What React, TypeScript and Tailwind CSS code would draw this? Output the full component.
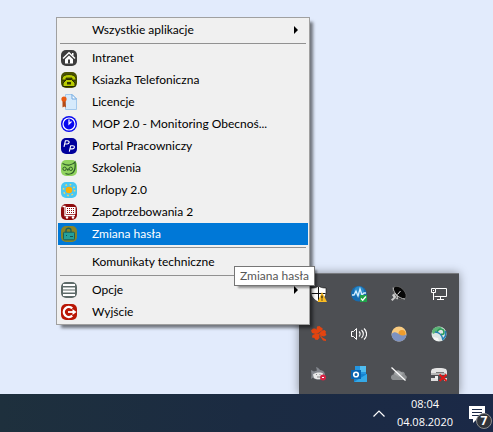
import type { ReactNode } from "react";

function Glyph({ children }: { children: ReactNode }) {
  return (
    <svg viewBox="0 0 16 16" className="size-4 shrink-0" aria-hidden="true" fill="none">
      {children}
    </svg>
  );
}

const HomeIcon = () => (
  <Glyph>
    <rect width="16" height="16" rx="5" fill="#3c3c3c" />
    <path d="M2 8.6 8 2.8l6 5.8" stroke="#fff" strokeWidth="1.4" />
    <path d="M4 9.3v4.2h8V9.3L8 5.6z" fill="#fff" />
    <path d="M7 9.5h2v4H7z" fill="#3c3c3c" />
    <path d="M11 3h1.5v3L11 4.5z" fill="#fff" />
  </Glyph>
);

const PhoneIcon = () => (
  <Glyph>
    <rect width="16" height="16" rx="5" fill="#4b5200" />
    <path d="M1 7c0-6 14-6 14 0v1h-4V6H5v2H1z" fill="#b9cc00" stroke="#252900" strokeWidth=".8" />
    <path d="M5.5 7.5h5L14 11v3.5H2V11z" fill="#b9cc00" stroke="#252900" />
    <path d="M6 10h4v2.5H6z" fill="#343a00" />
  </Glyph>
);

const LicenseIcon = () => (
  <Glyph>
    <path d="M4.5.5H11L15.5 5v10.5h-11z" fill="#d6eafc" stroke="#a4c9ec" />
    <path d="M11 .5V5h4.5z" fill="#fff" stroke="#70a8df" />
    <path d="M1.5 6h3L5 13.5l-1.7-1-1.8 1z" fill="#b44a16" />
    <circle cx="3" cy="5" r="2.6" fill="#e95a12" />
  </Glyph>
);

const ClockIcon = () => (
  <Glyph>
    <circle cx="8" cy="8" r="8" fill="#0909ef" />
    <circle cx="8" cy="8" r="6" stroke="#fff" strokeWidth="1.2" />
    <path d="M8 3.5V8l2.5-2.5" stroke="#fff" strokeWidth="1.2" />
  </Glyph>
);

const PortalIcon = () => (
  <Glyph>
    <rect width="16" height="16" rx="5" fill="#00009c" />
    <path d="m3 8.8 1.4-6h2.1c2.6 0 2 3.2-.4 3.2H4M8.3 13.7l1.4-6h2c2.6 0 2 3.2-.4 3.2H9" stroke="#fff" strokeWidth="1.1" />
  </Glyph>
);

const OwlIcon = () => (
  <Glyph>
    <rect width="16" height="16" rx="5" fill="#91d35f" />
    <path d="M1.5 3.5c3 1.5 5 2 7 1.5 2-.3 4-1 5.5-3 .5 4 .5 8-2 10.5-1.5 1.5-5 2-7.5 1" stroke="#2c5c28" strokeWidth="1.2" />
    <circle cx="3.6" cy="8.8" r="1.7" stroke="#2c5c28" />
    <circle cx="9.8" cy="8.8" r="1.7" stroke="#2c5c28" />
    <path d="m6 8.5.8 2 .8-2" stroke="#2c5c28" />
  </Glyph>
);

const SunIcon = () => (
  <Glyph>
    <rect width="16" height="16" rx="5" fill="#48c7f4" />
    <circle cx="8" cy="8" r="3.3" fill="#ffad00" />
    <circle cx="8" cy="8" r="5.6" stroke="#f6d45f" strokeWidth="1.6" strokeDasharray="1.6 2.8" />
  </Glyph>
);

const CartIcon = () => (
  <Glyph>
    <rect width="16" height="16" rx="5" fill="#8e0a0c" />
    <path d="M1.5 2.5H4v9h10" stroke="#fff" strokeWidth="1.3" />
    <path d="M5 3h9.5v7H5z" fill="#fff" />
    <path d="M6 4.5h8M6 6.5h8M6 8.5h8" stroke="#8e0a0c" strokeDasharray="1 1" />
    <circle cx="6" cy="13.5" r="1.2" fill="#fff" />
    <circle cx="12" cy="13.5" r="1.2" fill="#fff" />
  </Glyph>
);

const PasswordIcon = () => (
  <Glyph>
    <rect width="16" height="16" rx="5" fill="#898527" />
    <path d="M5 7V4.2C5 1.6 10 1.6 10 4.2V7" stroke="#17605d" strokeWidth="1.3" />
    <rect x="2.5" y="6.2" width="11" height="7.6" rx="1" fill="#25a09a" stroke="#17605d" />
    <path d="M5 9.5h1M9 10.5h3" stroke="#174f52" />
  </Glyph>
);

const OptionsIcon = () => (
  <Glyph>
    <rect width="16" height="16" rx="5" fill="#5d6a68" />
    <path d="M2 3h12M2 6.5h12M2 9.5h12M2 13h12" stroke="#fff" strokeWidth="2" />
  </Glyph>
);

const ExitIcon = () => (
  <Glyph>
    <rect width="16" height="16" rx="5" fill="#b91605" />
    <path d="M11.2 4.3A5 5 0 1 0 11.2 11.7" stroke="#fff" strokeWidth="2.4" />
    <path d="M7 8h5" stroke="#fff" strokeWidth="1.8" />
    <path d="m11.5 5 4 3-4 3z" fill="#fff" />
  </Glyph>
);

type Item = { label: string; icon?: ReactNode; submenu?: boolean; active?: boolean };

const groups: Item[][] = [
  [{ label: "Wszystkie aplikacje", submenu: true }],
  [
    { label: "Intranet", icon: <HomeIcon /> },
    { label: "Ksiazka Telefoniczna", icon: <PhoneIcon /> },
    { label: "Licencje", icon: <LicenseIcon /> },
    { label: "MOP 2.0 - Monitoring Obecnoś...", icon: <ClockIcon /> },
    { label: "Portal Pracowniczy", icon: <PortalIcon /> },
    { label: "Szkolenia", icon: <OwlIcon /> },
    { label: "Urlopy 2.0", icon: <SunIcon /> },
    { label: "Zapotrzebowania 2", icon: <CartIcon /> },
    { label: "Zmiana hasła", icon: <PasswordIcon />, active: true },
  ],
  [{ label: "Komunikaty techniczne" }],
  [
    { label: "Opcje", icon: <OptionsIcon />, submenu: true },
    { label: "Wyjście", icon: <ExitIcon /> },
  ],
];

function MenuRow({ label, icon, submenu, active }: Item) {
  return (
    <button
      type="button"
      role="menuitem"
      className={`flex h-[22px] w-full items-center pl-[3px] pr-2.5 text-left ${active ? "bg-[#0078d7] text-white" : "text-black"}`}
    >
      <span className="mr-[15px] size-4 shrink-0">{icon}</span>
      <span className="grow whitespace-nowrap">{label}</span>
      {submenu && (
        <svg viewBox="0 0 4 8" className="h-2 w-1 shrink-0" aria-hidden="true">
          <path d="M0 0l4 4-4 4z" fill="#000" />
        </svg>
      )}
    </button>
  );
}

const trayIcons: { name: string; art: ReactNode }[] = [
  {
    name: "Zabezpieczenia",
    art: (
      <>
        <path d="M7.5 0c2 1.5 4 2 7.5 2v4.5c0 4-3 7.500-7.500 9.500C3 14 0 10.500 0 6.500V2c3.500 0 5.500-.5 7.500-2z" fill="#fff" stroke="#111" strokeWidth=".6" />
        <path d="M7.5 .5v15M.5 7.5h14" stroke="#111" />
        <path d="M11 6l5 10H6.500z" fill="#f9bb22" />
        <path d="M11 9.500v3M11 13.500v1" stroke="#111" strokeWidth="1.2" />
      </>
    ),
  },
  {
    name: "Monitor",
    art: (
      <>
        <circle cx="7.8" cy="7.8" r="7.8" fill="#176caf" />
        <circle cx="8" cy="5.5" r="5" fill="#2c8bca" />
        <path d="M1 9h2l2-4 2 5 2-7 2 6 2-2h2" stroke="#d9f0ff" strokeWidth="1.3" />
        <path d="M9 9h7v7H9z" fill="#20a34a" />
        <path d="m10 12.5 1.7 1.7 3.2-3.7" stroke="#fff" strokeWidth="1.3" />
      </>
    ),
  },
  {
    name: "Antena",
    art: (
      <>
        <ellipse cx="8.500" cy="7" rx="8" ry="5" transform="rotate(46 8.500 7)" fill="#080808" stroke="#777" strokeWidth=".6" />
        <path d="M2.200 1.500C2 6 7 12.500 14 13" stroke="#c5c5c5" />
        <path d="m6.500 8.500 3-3.500" stroke="#ddd" />
        <path d="m1 9 3-2 3.500 4-1 2.500-2.500-1-2.500 2.500L0 13.500l2.500-2z" fill="#ccc" />
        <path d="m4 8.500 2 3-2 1" stroke="#666" />
      </>
    ),
  },
  {
    name: "Sieć",
    art: (
      <path d="M5 2.5h10.5v8H3.5M9.5 10.5v3M6 13.5h7M.5 2.5h4v4h-4zM2.5 6.5V14M2 4.5h1" stroke="#fff" />
    ),
  },
  {
    name: "Liść",
    art: (
      <g fill="#e34410">
        <path d="M7.500 7.500 4.500 8 1 7 0 4.500 2 2.500h2l3 2z" />
        <path d="M7.500 7 5.500 3.500 6 .5 8.500 0l1.500 1.500 1.500.5V4z" />
        <path d="m8 7.500 3-3 2.500-.5L15 5.500 14.500 7l1 2-2.500 1.500-2.500-.5z" />
        <path d="m8 8 .5 4-2 2-2.500-.5-.5-1.500L1 11.500 1.500 9l2.500-1z" />
        <path d="m7.500 7 4 4.500 3.500 2v1.500l-3-.5-4-6z" />
      </g>
    ),
  },
  {
    name: "Głośność",
    art: (
      <>
        <path d="M.5 5.5h2l3-3v11l-3-3h-2z" stroke="#fff" />
        <path d="M8 5.5c1.5 1.3 1.5 3.7 0 5M10.5 4c2.4 2.2 2.4 5.8 0 8M13 2.5c3.5 3.2 3.5 7.8 0 11" stroke="#fff" strokeWidth="1.1" />
      </>
    ),
  },
  {
    name: "Zachód słońca",
    art: (
      <>
        <circle cx="8" cy="8" r="7.5" fill="#f8cb80" />
        <circle cx="11" cy="7.5" r="3.5" fill="#ed9c2d" />
        <path d="M.5 8C3 5 6 6 8.500 8.500c2 1.500 4.500 1.500 7-.5C15.500 18 .5 18 .5 8z" fill="#7d92c0" />
      </>
    ),
  },
  {
    name: "Synchronizacja",
    art: (
      <>
        <circle cx="8" cy="8" r="7.5" fill="#dde6e4" />
        <path d="M1 6C1.5 1 7-.5 11 1.500L9 4C6 4 5 7 2 8z" fill="#5eb578" />
        <path d="M6 6c2-5 7-3 7 0 0 2-1 3-3 2" stroke="#2a9d58" strokeWidth="1.600" />
        <path d="M4 6c3 0 7 2 8 8M14.500 5v5l-3 4" stroke="#2580b4" strokeWidth="1.600" />
        <path d="M2 11c1 3 4 4 6 4l-1-3z" fill="#f8f8f8" />
      </>
    ),
  },
  {
    name: "Rekin",
    art: (
      <>
        <path d="M5 1c2 .5 3 1.500 4 3 3 .5 5 2 5 5 0 3-3 4.500-7 4.500-2 0-4-.5-5-2L0 13l.5-4L0 4l3 1.500 3-1z" fill="#84888f" />
        <path d="M2 8.500C5 6 10 6 12 7.500V12c-3 2-7 1.500-9 0z" fill="#e9e9e9" />
        <path d="M5 8.500h1M8.500 8.500h1M6 11h3" stroke="#888" />
        <circle cx="12" cy="11.5" r="3" fill="#d52444" />
        <path d="M11 11.5h2" stroke="#fff" />
      </>
    ),
  },
  {
    name: "Outlook",
    art: (
      <>
        <path d="M4 0h11v11H4z" fill="#2495df" />
        <path d="M9 0h6v6H9z" fill="#50bdf0" />
        <path d="M3 8h13v8H3z" fill="#1483d1" />
        <path d="m3 16 13-8v8z" fill="#35a9e7" />
        <path d="M0 4h10v9H0z" fill="#0864b1" />
        <circle cx="5" cy="8.5" r="2.3" stroke="#fff" strokeWidth="1.6" />
      </>
    ),
  },
  {
    name: "OneDrive",
    art: (
      <>
        <path d="M3 14c-4 0-4-5-.5-5.5C3 4 8 3 10 6c3-1 4 1 4 3 3 1 2 5-1 5z" fill="#8c8f91" />
        <path d="M3 8c3-4 7-3 9 0l-4 3z" fill="#a3a6a8" />
        <path d="m.5 1.5 14 13" stroke="#fff" strokeWidth="1.2" />
      </>
    ),
  },
  {
    name: "Dysk odłączony",
    art: (
      <>
        <path d="M1 3c2-1.500 12-1.500 14 0l1 2v4H0V5z" fill="#e4e4e4" />
        <path d="M0 7h15v2H0z" fill="#b6b6b6" />
        <path d="M5 6.500h8" stroke="#777" />
        <path d="M0 12h7v3H0zM13 12h3v3h-3z" fill="#ddd" />
        <path d="M4 10h3v3H4z" fill="#eee" />
        <path d="m8.5 8.500 7 6.500M15.5 8.500l-7 6.500" stroke="#e01818" strokeWidth="2" />
      </>
    ),
  },
];

export default function App() {
  return (
    <div className="flex h-screen flex-col overflow-hidden bg-[#e2ebfc] font-[Lato,'Open_Sans',sans-serif] text-xs">
      <main className="relative grow">
        <section
          aria-label="Ukryte ikony"
          className="absolute right-[34px] bottom-0 grid grid-cols-4 border-t border-[#77797d] bg-[#4d4f53] shadow-[0_0_9px_rgba(0,0,0,0.4)]"
        >
          {trayIcons.map(({ name, art }) => (
            <button key={name} type="button" aria-label={name} className="flex size-10 items-center justify-center">
              <Glyph>{art}</Glyph>
            </button>
          ))}
        </section>

        <div
          role="menu"
          className="absolute top-[17px] left-[56px] w-[254px] border border-[#a0a0a0] bg-[#f0f0f0] p-px shadow-[4px_4px_3px_-1px_rgba(0,0,0,0.5)]"
        >
          {groups.map((items, index) => (
            <div key={items[0].label}>
              {index > 0 && <hr className="mx-0.5 mt-0.5 mb-[3px] border-[#919191]" />}
              {items.map((item) => (
                <MenuRow key={item.label} {...item} />
              ))}
            </div>
          ))}
        </div>

        <div
          role="tooltip"
          className="absolute top-[266px] left-[234px] border border-[#767676] bg-white px-[5px] leading-[18px] whitespace-nowrap text-[#575757] shadow-[3px_3px_2px_-1px_rgba(0,0,0,0.4)]"
        >
          Zmiana hasła
        </div>
      </main>

      <footer className="relative flex h-[38px] shrink-0 items-center justify-end bg-linear-to-r from-[#1e303d] via-[#1b2b42] to-[#1b2947] font-['Open_Sans',sans-serif] text-white">
        <button type="button" aria-label="Pokaż ukryte ikony" className="mr-3">
          <svg viewBox="0 0 12 7" className="h-[7px] w-3" fill="none" aria-hidden="true">
            <path d="M.5 6.5 6 1l5.5 5.5" stroke="#fff" strokeWidth="1.2" />
          </svg>
        </button>
        <button type="button" className="mr-4 text-center text-[11px] leading-[18px]">
          <time className="block">08:04</time>
          <time className="block">04.08.2020</time>
        </button>
        <button type="button" aria-label="Powiadomienia: 7" className="relative mr-1 h-8 w-5">
          <svg viewBox="0 0 20 32" className="h-8 w-5" fill="none" aria-hidden="true">
            <path d="M0 9h16v13h-8l-4 4v-4H0z" fill="#fff" />
            <path d="M3 12.5h10M3 15.5h10M3 18.5h7" stroke="#1b2947" />
          </svg>
          <span className="absolute top-4 left-[7px] flex size-4 items-center justify-center rounded-full border border-[#8c8c8c] bg-[#30343a] text-xs font-bold">
            7
          </span>
        </button>
      </footer>
    </div>
  );
}
